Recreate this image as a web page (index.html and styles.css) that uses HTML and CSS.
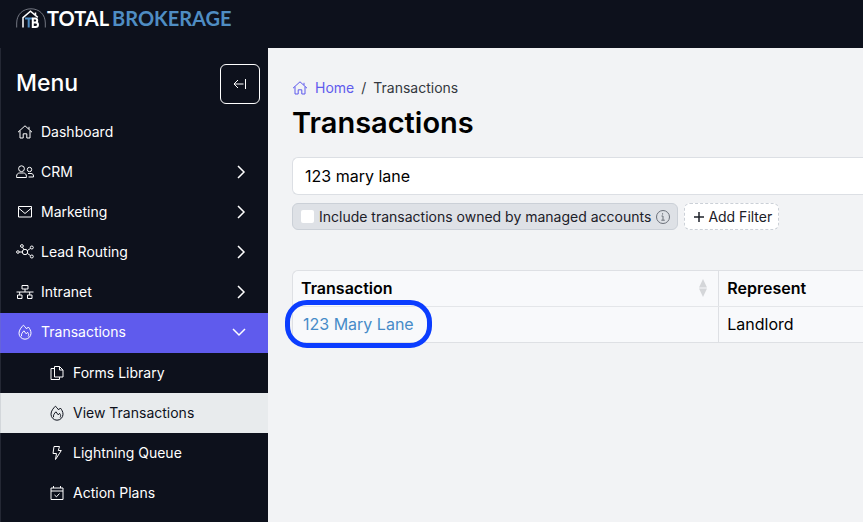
FILE: index.html
```
<!doctype html>
<html lang="en">
  <head>
    <meta charset="UTF-8" />
    <meta name="viewport" content="width=device-width, initial-scale=1.0" />
    <link rel="stylesheet" href="styles.css">
    <title>Transactions - Total Brokerage</title>
  </head>
  <body>
    <!-- Icons shared by several rows -->
    <svg width="0" height="0" class="sprite" aria-hidden="true">
      <symbol id="house" viewBox="0 0 16 16">
        <path d="M1 8.2 8 1.8l7 6.4M3 6.6V14h3.2V9.8h3.6V14H13V6.6M12 5.2V2.8" />
      </symbol>
      <symbol id="fire" viewBox="0 0 16 16">
        <path d="M6.4 1.2C4.300 3.300 2 6 2 9.200a6 6 0 0 0 12 0c0-2.300-1.200-4.600-2.700-6.200L9.600 4.900C8.800 3.500 7.600 2.200 6.400 1.200z" />
        <path d="M4.600 12.200C3.900 10.400 5.300 8.500 6.900 6.800l2.300 3 1.400-1.500c1.200 1.700 1.400 3 .5 4.200" />
      </symbol>
      <symbol id="chevron-right" viewBox="0 0 16 16">
        <path d="m5 2 6 6-6 6" />
      </symbol>
      <symbol id="chevron-down" viewBox="0 0 16 16">
        <path d="m2 5 6 6 6-6" />
      </symbol>
    </svg>

    <header class="topbar">
      <a class="logo" href="#">
        <svg class="logo-mark" viewBox="0 0 30 20" aria-hidden="true">
          <path class="arc" d="M.7 19.500V15C.7 6.500 6.800.8 15 .8S29.300 6.500 29.300 15v4.500" />
          <path class="roof" d="M7 19.500V9.600l7.500-6.400 7.300 6.200M19.500 7V4.500" />
          <path class="tee" d="M9 10.500h7.500M12.700 10.500v9" />
          <path class="bee" d="M16.800 10.500v8.500h2.700c3.300 0 3.300-4.500 0-4.500h-2.700 2.300c2.800 0 2.800-4 0-4z" />
        </svg>
        <span class="logo-total">TOTAL</span>
        <span class="logo-brokerage">BROKERAGE</span>
      </a>
    </header>

    <div class="layout">
      <aside class="sidebar">
        <div class="menu-head">
          <h2>Menu</h2>
          <button class="collapse" type="button" aria-label="Collapse menu">
            <svg class="icon" viewBox="0 0 16 16"><path d="M13.500 3v10M11.500 8H2M6 4 2 8l4 4" /></svg>
          </button>
        </div>
        <nav>
          <a class="item" href="#">
            <svg class="icon"><use href="#house" /></svg>
            <span>Dashboard</span>
          </a>
          <a class="item" href="#">
            <svg class="icon wide" viewBox="0 0 18 16">
              <circle cx="5.500" cy="4.700" r="2.900" />
              <path d="M.6 13.500v-1.300c0-2 1.400-3.200 3-3.200h3.800c1.600 0 3 1.200 3 3.200v1.300z" />
              <circle cx="13.500" cy="5.500" r="2.200" />
              <path d="M12 9.500h3c1.500 0 2.500 1 2.500 2.500v1h-5" />
            </svg>
            <span>CRM</span>
            <svg class="icon chevron"><use href="#chevron-right" /></svg>
          </a>
          <a class="item" href="#">
            <svg class="icon" viewBox="0 0 16 16">
              <path d="M1.500 2.500h13v10.500h-13zM1.500 4l6.500 5.500L14.500 4" />
            </svg>
            <span>Marketing</span>
            <svg class="icon chevron"><use href="#chevron-right" /></svg>
          </a>
          <a class="item" href="#">
            <svg class="icon wide" viewBox="0 0 18 16">
              <circle cx="9" cy="8" r="2.700" />
              <circle cx="1.900" cy="8" r="1.300" />
              <circle cx="5.900" cy="2" r="1.400" />
              <circle cx="15.800" cy="3.500" r="1.500" />
              <circle cx="15.800" cy="12.500" r="1.500" />
              <path d="M3.200 8h3.100M6.600 3.300l1.200 2.200M11.300 6.600l3.200-2.200M11.300 9.400l3.200 2.200" />
            </svg>
            <span>Lead Routing</span>
            <svg class="icon chevron"><use href="#chevron-right" /></svg>
          </a>
          <a class="item" href="#">
            <svg class="icon wide" viewBox="0 0 18 16">
              <path d="M6 1.500h6v3.500H6zM1.500 11h4.500v3.500H1.500zM11.500 11H16v3.500h-4.500zM9 5v3M.5 8h17M3.700 8v3M13.700 8v3" />
            </svg>
            <span>Intranet</span>
            <svg class="icon chevron"><use href="#chevron-right" /></svg>
          </a>
          <a class="item active" href="#">
            <svg class="icon"><use href="#fire" /></svg>
            <span>Transactions</span>
            <svg class="icon chevron"><use href="#chevron-down" /></svg>
          </a>
          <div class="submenu">
            <a class="item" href="#">
              <svg class="icon" viewBox="0 0 16 16">
                <path d="M5.500 1.500h5l3.500 3.500v7H5.500zM10.500 1.500V5H14M5.500 3.500H2v11h8.500V12" />
              </svg>
              <span>Forms Library</span>
            </a>
            <a class="item current" href="#">
              <svg class="icon"><use href="#fire" /></svg>
              <span>View Transactions</span>
            </a>
            <a class="item" href="#">
              <svg class="icon" viewBox="0 0 16 16">
                <path d="M5 1.500h5.500L9.300 5.500h3L6.500 14.500 7.500 8.500H4z" />
              </svg>
              <span>Lightning Queue</span>
            </a>
            <a class="item" href="#">
              <svg class="icon" viewBox="0 0 16 16">
                <path d="M2 3h12v11.500H2zM2 6h12M4.500 1v2M11.500 1v2M5.500 10l2 1.800 3-3.300" />
              </svg>
              <span>Action Plans</span>
            </a>
          </div>
        </nav>
      </aside>

      <main class="content">
        <nav class="breadcrumb">
          <a href="#">
            <svg class="icon"><use href="#house" /></svg>
            Home
          </a>
          <span>/</span>
          <span>Transactions</span>
        </nav>
        <h1>Transactions</h1>
        <input class="search" type="text" value="123 mary lane" aria-label="Search transactions" />

        <div class="filters">
          <label class="managed">
            <input type="checkbox" />
            Include transactions owned by managed accounts
            <svg class="icon info" viewBox="0 0 16 16">
              <circle cx="8" cy="8" r="6.500" />
              <path d="M6.500 7H8v4.200M6.300 11.200h3.500M7.600 4.200v1.400" />
            </svg>
          </label>
          <button class="add-filter" type="button">
            <svg class="plus" viewBox="0 0 12 12"><path d="M6 1v10M1 6h10" /></svg>
            Add Filter
          </button>
        </div>

        <div class="table-wrap">
          <table>
            <thead>
              <tr>
                <th scope="col">
                  <div class="sortable">
                    Transaction
                    <svg class="sort" viewBox="0 0 8 18"><path d="M0 8.500 4 0l4 8.500zM0 9.500h8L4 18z" /></svg>
                  </div>
                </th>
                <th scope="col">Represent</th>
              </tr>
            </thead>
            <tbody>
              <tr>
                <td><a class="highlighted" href="#">123 Mary Lane</a></td>
                <td>Landlord</td>
              </tr>
            </tbody>
          </table>
        </div>
      </main>
    </div>
  </body>
</html>
```
FILE: styles.css
```
* {
  box-sizing: border-box;
}

body {
  display: flex;
  flex-direction: column;
  min-height: 100vh;
  margin: 0;
  background: #0d111c;
  color: #000;
  font-family: Inter, "Liberation Sans", sans-serif;
  font-size: 14px;
  line-height: 20px;
}

a {
  color: inherit;
  text-decoration: none;
}

button,
input {
  font: inherit;
}

.sprite {
  position: absolute;
}

.icon {
  flex: none;
  width: 16px;
  height: 16px;
  fill: none;
  stroke: currentColor;
  stroke-width: 1;
}

/* Top bar */
.topbar {
  height: 48px;
  padding: 6px 16px;
}

.logo {
  display: flex;
  align-items: center;
  height: 24px;
  color: #fff;
  font-family: Lato, sans-serif;
  font-size: 20px;
  font-weight: 700;
}

.logo-mark {
  width: 30px;
  height: 20px;
  margin-right: 1px;
  fill: none;
  stroke: #fff;
}

.logo-mark .arc {
  stroke: #737782;
}

.logo-mark .roof {
  stroke-width: 1.5;
}

.logo-mark .tee {
  stroke: #4f8dc3;
  stroke-width: 2;
}

.logo-mark .bee {
  stroke-width: 2;
}

.logo-brokerage {
  margin-left: 3px;
  color: #4f8dc3;
}

/* Sidebar */
.layout {
  display: flex;
  flex: 1;
}

.sidebar {
  position: relative;
  flex: none;
  width: 268px;
  color: #fff;
}

.sidebar::before {
  content: "";
  position: absolute;
  inset: 0 auto 0 0;
  width: 1px;
  background: rgba(128, 134, 150, 0.2);
}

.menu-head {
  display: flex;
  justify-content: space-between;
  padding: 16px 8px 9px 16px;
}

.menu-head h2 {
  margin: 0;
  font-size: 23px;
  font-weight: 500;
  line-height: 38px;
}

.collapse {
  display: flex;
  align-items: center;
  justify-content: center;
  width: 40px;
  height: 40px;
  padding: 0;
  border: 1px solid #fff;
  border-radius: 6px;
  background: none;
  color: #fff;
}

.item {
  display: flex;
  align-items: center;
  gap: 8px;
  height: 40px;
  padding: 0 19px 2px 17px;
}

.item .wide {
  width: 18px;
  margin: 0 -1px;
}

.item .chevron {
  margin-left: auto;
  stroke-width: 1.5;
}

.active {
  padding-right: 21px;
  background: #5f5bed;
}

.submenu .item {
  padding: 0 20px 0 49px;
}

.submenu .current {
  background: #e8ebed;
  color: #0d111c;
}

/* Page */
.content {
  flex: 1;
  min-width: 0;
  padding: 30px 0 0 24px;
  background: #f2f3f5;
}

.breadcrumb {
  display: flex;
  gap: 7px;
  color: #343840;
}

.breadcrumb a {
  display: flex;
  align-items: center;
  gap: 7px;
  color: #5f5bed;
}

h1 {
  margin: 5px 0 14px;
  font-size: 29px;
  font-weight: 600;
  line-height: 40px;
}

.search {
  display: block;
  width: 100%;
  height: 38px;
  padding: 0 12px;
  border: 1px solid #dcdfe4;
  border-right: 0;
  border-radius: 6px 0 0 6px;
  background: #fff;
  color: #000;
  font-size: 16px;
}

.filters {
  display: flex;
  gap: 6px;
  margin: 8px 0 40px;
}

.managed,
.add-filter {
  display: flex;
  align-items: center;
  height: 27px;
  padding: 0 6px 0 8px;
  border: 1px solid #cbd0d7;
  border-radius: 6px;
  color: #1c2028;
  white-space: nowrap;
}

.managed {
  background: #dee1e6;
}

.managed input {
  appearance: none;
  width: 13px;
  height: 13px;
  margin: 0 5px 0 0;
  border-radius: 2px;
  background: #fff;
}

.info {
  margin-left: 4px;
  color: #6b7079;
}

.add-filter {
  gap: 3px;
  border-style: dashed;
  background: #fff;
}

.plus {
  width: 12px;
  height: 12px;
  stroke: currentColor;
  stroke-width: 1.5;
}

/* Results */
.table-wrap {
  border: 1px solid #dee0e4;
  border-right: 0;
  border-radius: 6px 0 0 0;
  background: #f8f9fb;
}

table {
  width: 100%;
  border-collapse: collapse;
  table-layout: fixed;
  font-size: 16px;
}

th,
td {
  height: 36px;
  padding: 0 8px;
  text-align: left;
}

th {
  height: 35px;
  border-bottom: 1px solid #e4e6e9;
  font-weight: 600;
}

th:first-child {
  width: 74.7%;
}

th + th,
td + td {
  border-left: 1px solid #dee0e4;
}

.sortable {
  display: flex;
  align-items: center;
  justify-content: space-between;
  padding-right: 3px;
}

.sort {
  width: 8px;
  height: 18px;
  fill: #d4d6d9;
}

.highlighted {
  position: relative;
  padding-left: 2px;
  color: #468bc8;
}

/* Ring around the matching record */
.highlighted::after {
  content: "";
  position: absolute;
  inset: -14px -18px -14px -16px;
  border: 5px solid #0b3dff;
  border-radius: 22px;
}
```
